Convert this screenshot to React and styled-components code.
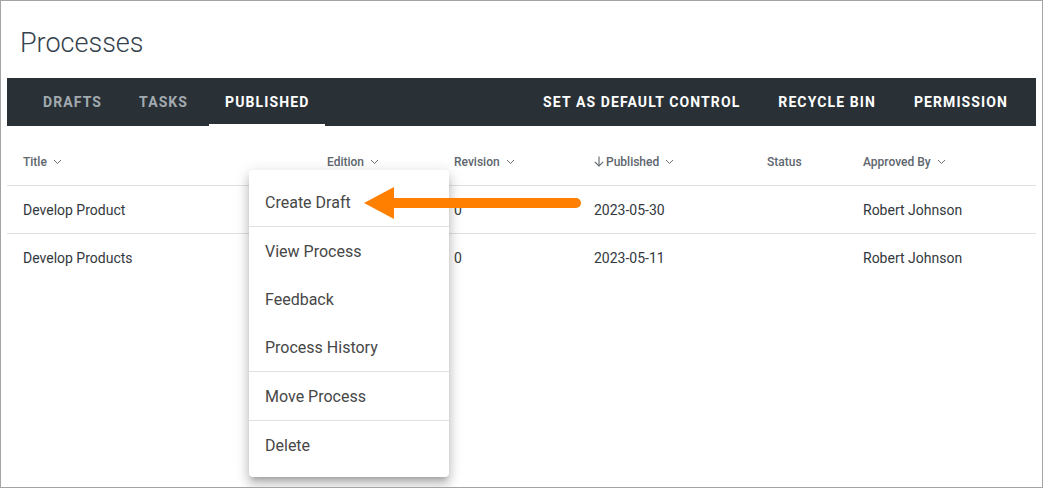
import React from "react";
import styled, { createGlobalStyle } from "styled-components";

const GlobalStyle = createGlobalStyle`
  html, body {
    margin: 0;
    padding: 0;
    background: #fff;
    font-family: Roboto, "Noto Sans", sans-serif;
  }
`;

const Page = styled.div`
  position: relative;
  box-sizing: border-box;
  width: 1043px;
  height: 488px;
  border: 1px solid #a4a4a4;
  padding: 0 6px;
  overflow: hidden;
`;

const Title = styled.h1`
  margin: 0;
  padding: 27px 0 20px 13px;
  font-size: 27px;
  line-height: 30px;
  font-weight: 300;
  color: #34424e;
`;

const NavBar = styled.nav`
  display: flex;
  justify-content: space-between;
  align-items: stretch;
  height: 48px;
  background: #293137;
  padding: 0 28px 0 20px;
`;

const TabList = styled.div`
  display: flex;
  gap: 5px;
`;

const Tab = styled.div`
  display: flex;
  align-items: center;
  padding: 0 16px;
  font-size: 14px;
  font-weight: 700;
  letter-spacing: 1.1px;
  color: ${(p) => (p.$active ? "#ffffff" : "#a2aab0")};
  box-shadow: ${(p) => (p.$active ? "inset 0 -2px 0 #ffffff" : "none")};
`;

const Actions = styled.div`
  display: flex;
  align-items: center;
  gap: 38px;
`;

const Action = styled.div`
  font-size: 14px;
  font-weight: 700;
  letter-spacing: 1.1px;
  color: #ffffff;
`;

const Table = styled.div`
  margin-top: 11px;
`;

const columns = "304px 127px 140px 173px 96px 1fr";

const HeaderRow = styled.div`
  display: grid;
  grid-template-columns: ${columns};
  height: 48px;
  align-items: center;
  padding-top: 1px;
  box-sizing: border-box;
`;

const HeadCell = styled.div`
  display: flex;
  align-items: center;
  gap: 6px;
  padding-left: 16px;
  font-size: 12px;
  font-weight: 500;
  color: #5d666d;
`;

const Row = styled.div`
  display: grid;
  grid-template-columns: ${columns};
  box-sizing: border-box;
  height: 48px;
  align-items: center;
  border-top: 1px solid #e0e0e0;
`;

const Cell = styled.div`
  padding-left: 16px;
  font-size: 14px;
  color: #33383d;
`;

const Menu = styled.div`
  position: absolute;
  left: 248px;
  top: 169px;
  width: 200px;
  padding: 8px 0;
  background: #fff;
  border-radius: 4px;
  box-shadow: 0 5px 5px -3px rgba(0, 0, 0, 0.2), 0 8px 10px 1px rgba(0, 0, 0, 0.14),
    0 3px 14px 2px rgba(0, 0, 0, 0.12);
`;

const MenuItem = styled.div`
  display: flex;
  align-items: center;
  height: 48px;
  padding: 0 16px;
  font-size: 16px;
  color: #474747;
`;

const Divider = styled.div`
  height: 1px;
  background: #e0e0e0;
`;

const Pointer = styled.svg`
  position: absolute;
  left: 359px;
  top: 182px;
`;

function Chevron() {
  return (
    <svg width="9" height="6" viewBox="0 0 9 6">
      <polyline points="1,1 4.5,4.5 8,1" fill="none" stroke="#6a7278" strokeWidth="1" />
    </svg>
  );
}

function SortArrow() {
  return (
    <svg width="10" height="11" viewBox="0 0 10 11" style={{ marginRight: -4 }}>
      <line x1="5" y1="0.5" x2="5" y2="10" stroke="#5d666d" strokeWidth="1.1" />
      <polyline points="0.8,5.8 5,10 9.2,5.8" fill="none" stroke="#5d666d" strokeWidth="1.1" />
    </svg>
  );
}

const rows = [
  { title: "Develop Product", revision: "0", published: "2023-05-30", by: "Robert Johnson" },
  { title: "Develop Products", revision: "0", published: "2023-05-11", by: "Robert Johnson" },
];

export default function App() {
  return (
    <>
      <GlobalStyle />
      <Page>
        <Title>Processes</Title>
        <NavBar>
          <TabList>
            <Tab>DRAFTS</Tab>
            <Tab>TASKS</Tab>
            <Tab $active>PUBLISHED</Tab>
          </TabList>
          <Actions>
            <Action>SET AS DEFAULT CONTROL</Action>
            <Action>RECYCLE BIN</Action>
            <Action>PERMISSION</Action>
          </Actions>
        </NavBar>
        <Table>
          <HeaderRow>
            <HeadCell>Title <Chevron /></HeadCell>
            <HeadCell>Edition <Chevron /></HeadCell>
            <HeadCell>Revision <Chevron /></HeadCell>
            <HeadCell><SortArrow />Published <Chevron /></HeadCell>
            <HeadCell>Status</HeadCell>
            <HeadCell>Approved By <Chevron /></HeadCell>
          </HeaderRow>
          {rows.map((r) => (
            <Row key={r.title}>
              <Cell>{r.title}</Cell>
              <Cell />
              <Cell>{r.revision}</Cell>
              <Cell>{r.published}</Cell>
              <Cell />
              <Cell>{r.by}</Cell>
            </Row>
          ))}
        </Table>
        <Menu>
          <MenuItem>Create Draft</MenuItem>
          <Divider />
          <MenuItem>View Process</MenuItem>
          <MenuItem>Feedback</MenuItem>
          <MenuItem>Process History</MenuItem>
          <Divider />
          <MenuItem>Move Process</MenuItem>
          <Divider />
          <MenuItem>Delete</MenuItem>
        </Menu>
        <Pointer width="226" height="38" viewBox="0 0 226 38">
          <polygon points="4,20 34,4 34,36" fill="#ff8000" />
          <line x1="30" y1="20" x2="216" y2="20" stroke="#ff8000" strokeWidth="10" strokeLinecap="round" />
        </Pointer>
      </Page>
    </>
  );
}
